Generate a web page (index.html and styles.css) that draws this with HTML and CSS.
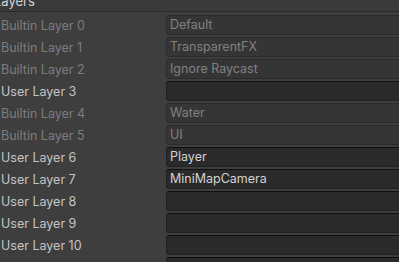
FILE: index.html
```html
<!DOCTYPE html>
<html lang="en">
<head>
    <meta charset="UTF-8">
    <title>Tags and Layers</title>
    <link rel="stylesheet" href="styles.css">
</head>
<body>
    <div class="panel">
        <div class="header">Layers</div>
        <div class="layers">
            <div class="row builtin"><span class="label">Builtin Layer 0</span><div class="field">Default</div></div>
            <div class="row builtin"><span class="label">Builtin Layer 1</span><div class="field">TransparentFX</div></div>
            <div class="row builtin"><span class="label">Builtin Layer 2</span><div class="field">Ignore Raycast</div></div>
            <div class="row"><span class="label">User Layer 3</span><div class="field"></div></div>
            <div class="row builtin"><span class="label">Builtin Layer 4</span><div class="field">Water</div></div>
            <div class="row builtin"><span class="label">Builtin Layer 5</span><div class="field">UI</div></div>
            <div class="row"><span class="label">User Layer 6</span><div class="field">Player</div></div>
            <div class="row"><span class="label">User Layer 7</span><div class="field">MiniMapCamera</div></div>
            <div class="row"><span class="label">User Layer 8</span><div class="field"></div></div>
            <div class="row"><span class="label">User Layer 9</span><div class="field"></div></div>
            <div class="row"><span class="label">User Layer 10</span><div class="field"></div></div>
            <div class="row"><span class="label"></span><div class="field"></div></div>
        </div>
    </div>
</body>
</html>
```

FILE: styles.css
```css
html, body {
    margin: 0;
    padding: 0;
    height: 100%;
    overflow: hidden;
    background-color: #3e3e3e;
}
.panel {
    font-family: Inter, "Noto Sans", sans-serif;
    font-size: 12.5px;
    color: #c4c4c4;
    margin-left: -7px;
    width: 460px;
}
.header {
    height: 11px;
    line-height: 2px;
    padding-left: 1px;
    background-color: #3a3a3a;
    border-bottom: 1px solid #2a2a2a;
    color: #d2d2d2;
    font-size: 13px;
}
.layers {
    padding-top: 2px;
}
.row {
    display: grid;
    grid-template-columns: 173px 1fr;
    height: 22px;
    align-items: center;
}
.label {
    padding-left: 8px;
    white-space: nowrap;
}
.field {
    height: 18px;
    line-height: 18px;
    padding-left: 3px;
    background-color: #2a2a2a;
    border: 1px solid #212121;
    border-top-color: #0f0f0f;
    border-radius: 3px;
    color: #d2d2d2;
}
.builtin .label {
    color: #7d7d7d;
}
.builtin .field {
    background-color: #353535;
    border-color: #2b2b2b;
    color: #818181;
}
```
